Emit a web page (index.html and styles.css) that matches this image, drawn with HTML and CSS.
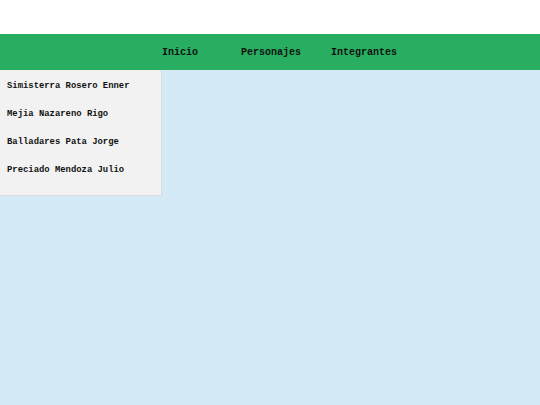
FILE: index.html
```html
<!DOCTYPE html>
<html lang="es">
<head>
<meta charset="utf-8">
<title>Integrantes</title>
<link rel="stylesheet" href="styles.css">
</head>
<body>
<div class="top"></div>
<nav class="nav">
  <a class="nav-link nav-inicio" href="#">Inicio</a>
  <a class="nav-link nav-personajes" href="#">Personajes</a>
  <a class="nav-link nav-integrantes" href="#">Integrantes</a>
</nav>
<aside class="side">
  <div class="side-item">Simisterra Rosero Enner</div>
  <div class="side-item">Mejia Nazareno Rigo</div>
  <div class="side-item">Balladares Pata Jorge</div>
  <div class="side-item">Preciado Mendoza Julio</div>
</aside>
</body>
</html>
```
FILE: styles.css
```css
html, body {
  margin: 0;
  padding: 0;
}
body {
  background: #d5eaf7;
  min-height: 405px;
  font-family: Courier, "Nimbus Mono PS", "Courier New", "Liberation Mono", monospace;
  font-weight: bold;
  color: #111;
}
.top {
  height: 34px;
  background: #ffffff;
}
.nav {
  height: 36px;
  background: #27ae60;
  display: flex;
  align-items: center;
  padding-left: 162px;
}
.nav-link {
  color: #111;
  text-decoration: none;
  font-size: 10px;
}
.nav-personajes {
  margin-left: 43px;
}
.nav-integrantes {
  margin-left: 30px;
}
.side {
  width: 161px;
  background: #f2f2f2;
  border-right: 1px solid #dcdcdc;
  border-bottom: 1px solid #dcdcdc;
  padding: 2px 0 11px 0;
}
.side-item {
  height: 28px;
  line-height: 28px;
  padding-left: 7px;
  font-size: 8.9px;
}
```
